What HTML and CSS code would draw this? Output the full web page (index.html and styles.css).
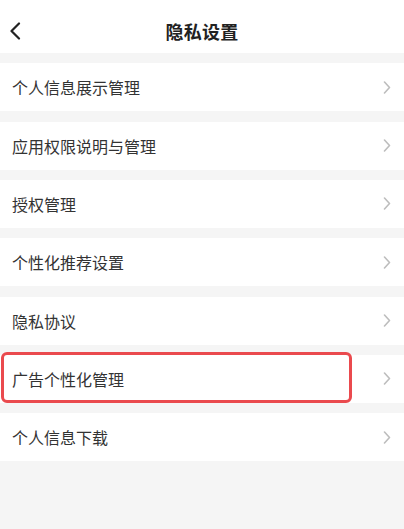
FILE: index.html
```html
<!DOCTYPE html>
<html lang="zh">
<head>
<meta charset="utf-8">
<title>隐私设置</title>
<link rel="stylesheet" href="styles.css">
</head>
<body>
<div class="page">
  <header class="header">
    <svg class="back" width="12" height="18" viewBox="0 0 12 18"><path d="M10 1.5 L2.5 9 L10 16.5" fill="none" stroke="#222" stroke-width="2.2" stroke-linecap="round" stroke-linejoin="round"/></svg>
    <h1 class="title">隐私设置</h1>
  </header>
  <ul class="list">
    <li class="row"><span class="label">个人信息展示管理</span><svg class="chev" width="8" height="13" viewBox="0 0 8 13"><path d="M1.5 1 L6.5 6.5 L1.5 12" fill="none" stroke="#bdbdbd" stroke-width="1.6" stroke-linecap="round" stroke-linejoin="round"/></svg></li>
    <li class="row"><span class="label">应用权限说明与管理</span><svg class="chev" width="8" height="13" viewBox="0 0 8 13"><path d="M1.5 1 L6.5 6.5 L1.5 12" fill="none" stroke="#bdbdbd" stroke-width="1.6" stroke-linecap="round" stroke-linejoin="round"/></svg></li>
    <li class="row"><span class="label">授权管理</span><svg class="chev" width="8" height="13" viewBox="0 0 8 13"><path d="M1.5 1 L6.5 6.5 L1.5 12" fill="none" stroke="#bdbdbd" stroke-width="1.6" stroke-linecap="round" stroke-linejoin="round"/></svg></li>
    <li class="row"><span class="label">个性化推荐设置</span><svg class="chev" width="8" height="13" viewBox="0 0 8 13"><path d="M1.5 1 L6.5 6.5 L1.5 12" fill="none" stroke="#bdbdbd" stroke-width="1.6" stroke-linecap="round" stroke-linejoin="round"/></svg></li>
    <li class="row"><span class="label">隐私协议</span><svg class="chev" width="8" height="13" viewBox="0 0 8 13"><path d="M1.5 1 L6.5 6.5 L1.5 12" fill="none" stroke="#bdbdbd" stroke-width="1.6" stroke-linecap="round" stroke-linejoin="round"/></svg></li>
    <li class="row highlighted"><span class="label">广告个性化管理</span><svg class="chev" width="8" height="13" viewBox="0 0 8 13"><path d="M1.5 1 L6.5 6.5 L1.5 12" fill="none" stroke="#bdbdbd" stroke-width="1.6" stroke-linecap="round" stroke-linejoin="round"/></svg><span class="mark"></span></li>
    <li class="row"><span class="label">个人信息下载</span><svg class="chev" width="8" height="13" viewBox="0 0 8 13"><path d="M1.5 1 L6.5 6.5 L1.5 12" fill="none" stroke="#bdbdbd" stroke-width="1.6" stroke-linecap="round" stroke-linejoin="round"/></svg></li>
  </ul>
</div>
</body>
</html>
```
FILE: styles.css
```css
html, body {
  margin: 0;
  padding: 0;
  background: #f5f5f5;
}
body {
  font-family: "Noto Sans CJK SC", "Noto Sans", sans-serif;
  color: #333;
}
.page {
  width: 404px;
  min-height: 529px;
  background: #f5f5f5;
}
.header {
  height: 45px;
  padding-top: 8px;
  background: #fff;
  display: flex;
  align-items: center;
  justify-content: center;
  position: relative;
}
.back {
  position: absolute;
  left: 9px;
  top: 22px;
}
.title {
  margin: 0;
  font-size: 18px;
  font-weight: 700;
  color: #222;
  letter-spacing: 0.3px;
  line-height: 24px;
}
.list {
  list-style: none;
  margin: 0;
  padding: 0;
  display: flex;
  flex-direction: column;
}
.row {
  margin-top: 10.33px;
  height: 48px;
  background: #fff;
  display: flex;
  align-items: center;
  justify-content: space-between;
  padding: 0 13px 0 12px;
  position: relative;
}
.label {
  font-size: 16px;
  color: #333;
  line-height: 22px;
}
.chev {
  display: block;
}
.mark {
  position: absolute;
  left: 1px;
  top: -3px;
  width: 345px;
  height: 45px;
  border: 3px solid #ea4a4e;
  border-radius: 6px;
}
```
